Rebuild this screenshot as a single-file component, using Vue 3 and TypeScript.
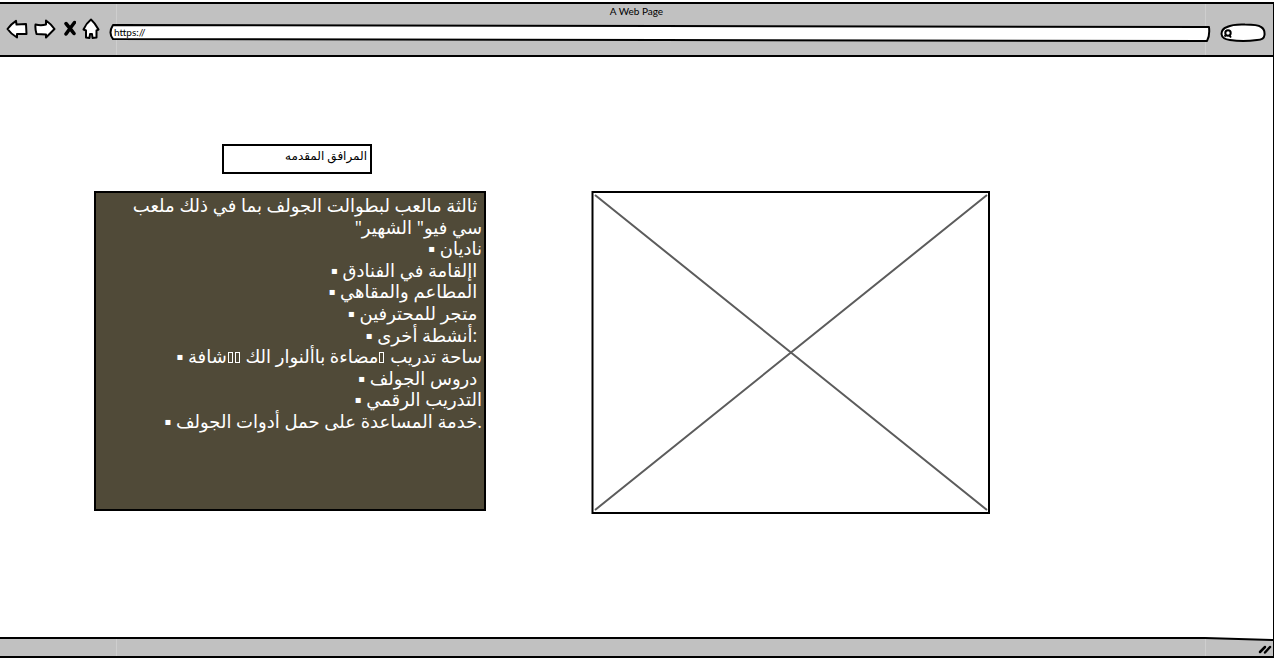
<script setup lang="ts">
import { ref } from 'vue'

const address = ref('https://')
const query = ref('')

// A null part stands for a character that has no glyph.
type Line = { bullet?: boolean; parts: (string | null)[] }
const lines: Line[] = [
  { parts: ['ثالثة مالعب لبطوالت الجولف بما في ذلك ملعب '] },
  { parts: ['"سي فيو" الشهير'] },
  { bullet: true, parts: [' ناديان'] },
  { bullet: true, parts: [' اإلقامة في الفنادق '] },
  { bullet: true, parts: [' المطاعم والمقاهي '] },
  { bullet: true, parts: [' متجر للمحترفين '] },
  { bullet: true, parts: [' أنشطة أخرى: '] },
  { bullet: true, parts: [' ساحة تدريب ', null, 'مضاءة باألنوار الك ', null, null, 'شافة'] },
  { bullet: true, parts: [' دروس الجولف '] },
  { bullet: true, parts: [' التدريب الرقمي'] },
  { bullet: true, parts: [' خدمة المساعدة على حمل أدوات الجولف.'] },
]
</script>

<template>
  <div class="window">
    <header class="bar">
      <h1 class="title">A Web Page</h1>
      <div class="tools">
        <nav class="nav" aria-label="Browser">
          <button type="button" aria-label="Back">
            <svg width="22" height="20" viewBox="0 0 22 20"><path class="shape" d="M1.5 10 Q5 5 10 1.8 L10.500 5.500 L20 5 L20.500 15 L11 15 L11 18.500 Q5 15 1.500 10Z" /></svg>
          </button>
          <button type="button" aria-label="Forward">
            <svg width="22" height="20" viewBox="0 0 22 20"><path class="shape" d="M1.500 5.500 Q7 7 12 5.500 L12 1.500 Q17 5 20.500 10 L12 18.500 L12 15.500 L2.500 15 Q1 10 1.500 5.500Z" /></svg>
          </button>
          <button type="button" aria-label="Stop">
            <svg width="14" height="20" viewBox="0 0 14 20"><path class="cross" d="M4 4.500 Q7 8 12 14.500 M12.500 3.500 Q9 8 4 15" /></svg>
          </button>
          <button type="button" aria-label="Home">
            <svg width="18" height="22" viewBox="0 0 18 22"><path class="shape" d="M9 1.500 Q13 5 16.500 11.500 L14.500 12.500 L14.500 19.500 L10.500 20 L10 16 L8 16 L7.500 20 L4 19.500 L4 12.500 L1.500 11.500 Q4 5.500 9 1.500Z" /></svg>
          </button>
        </nav>
        <label class="address">
          <svg class="outline" viewBox="0 0 1100 18" preserveAspectRatio="none" aria-hidden="true"><path class="shape" d="M4 1 L550 2 L1098 3 Q1099 12 1096 17 L550 16 L4 15 Q-1 9 4 1Z" /></svg>
          <input v-model="address" type="text" aria-label="Address" />
        </label>
        <label class="search">
          <svg class="outline" viewBox="0 0 46 20" preserveAspectRatio="none" aria-hidden="true">
            <path class="shape" d="M7 5 Q13 2 25 2.500 Q38 2.500 41 5 Q45 7 44.500 13 Q44 18 37 18 Q23 20 10 18 Q2 17 1.500 12 Q1.500 7 7 5Z" />
            <circle class="glass" cx="8" cy="11" r="2.700" />
            <path class="glass" d="M5.500 13.500 L4.500 14.500 M9 13 L11 15.500" />
          </svg>
          <input v-model="query" type="text" aria-label="Search" />
        </label>
      </div>
    </header>

    <main class="content">
      <section class="facilities">
        <h2 class="heading">المرافق المقدمه</h2>
        <div class="panel">
          <p v-for="(line, i) in lines" :key="i"><span v-if="line.bullet" class="bullet">▪</span><template v-for="(part, j) in line.parts" :key="j"><span v-if="part === null" class="missing"></span><template v-else>{{ part }}</template></template></p>
        </div>
      </section>
      <svg class="picture" viewBox="0 0 399 323" preserveAspectRatio="none" role="img" aria-label="Image placeholder">
        <path class="frame" d="M1.500 1 L398 1 L398 322 L1.500 322Z" />
        <path class="diagonal" d="M4 4 L396 319 M396 4 L4 319" />
      </svg>
    </main>

    <footer class="status">
      <svg class="edge" viewBox="0 0 1274 5" preserveAspectRatio="none" aria-hidden="true"><path class="above" d="M0 0 H1274 V3 L1206 1 H0Z" /><path class="line" d="M0 1 L1206 1 L1274 3" /></svg>
      <svg class="grip" width="14" height="12" viewBox="0 0 14 12" aria-hidden="true"><path class="mark" d="M2 8 L7 3 M7 8.500 L12 3" /></svg>
    </footer>
  </div>
</template>

<style>
body {
  background: #fff;
}
</style>

<style scoped>
.window {
  box-sizing: border-box;
  min-height: 100vh;
  padding: 2px 0 5px;
  display: flex;
  flex-direction: column;
  font-family: "Open Sans", "DejaVu Sans", sans-serif;
  color: #000;
}
.bar {
  box-sizing: border-box;
  height: 55px;
  border: solid #000;
  border-width: 2px 1px 2px 0;
}
.bar,
.status {
  background: linear-gradient(90deg, transparent 116px, #cecece 116px, #cecece 117px, transparent 117px), linear-gradient(270deg, transparent 67px, #cecece 67px, #cecece 68px, transparent 68px), #c1c1c1;
}
.title {
  margin: 0;
  font-family: Lato, sans-serif;
  font-size: 10px;
  font-weight: 400;
  line-height: 14px;
  text-align: center;
}
.tools {
  display: flex;
  align-items: center;
  gap: 9px;
  height: 24px;
  padding: 0 7px 0 6px;
}
.nav {
  display: flex;
  align-items: center;
  align-self: flex-start;
  gap: 6px;
}
button {
  display: block;
  padding: 0;
  border: 0;
  background: none;
}
button svg,
.outline {
  display: block;
}
.shape {
  fill: #fff;
  stroke: #000;
  stroke-width: 2;
  stroke-linejoin: round;
  vector-effect: non-scaling-stroke;
}
.cross {
  fill: none;
  stroke: #000;
  stroke-width: 3.5;
  stroke-linecap: round;
}
.glass {
  fill: none;
  stroke: #000;
  stroke-width: 2;
}
.address,
.search {
  display: grid;
  align-self: flex-end;
}
.address {
  flex: 1;
}
.address > *,
.search > * {
  grid-area: 1 / 1;
}
.outline {
  width: 100%;
  height: 18px;
}
.search {
  width: 46px;
}
.search .outline {
  height: 20px;
}
input {
  box-sizing: border-box;
  width: 100%;
  min-width: 0;
  height: 16px;
  padding: 0 5px;
  border: 0;
  outline: 0;
  background: none;
  font-family: Lato, sans-serif;
  font-size: 10px;
  color: #000;
}
.search input {
  padding-left: 14px;
}
.content {
  flex: 1;
  display: grid;
  grid-template-columns: 94fr 392fr 105fr 399fr 283fr;
  align-items: end;
  align-content: start;
  padding: 87px 0 24px;
  border-right: 1px solid #000;
}
.facilities {
  grid-column: 2;
  min-width: 0;
  display: flex;
  flex-direction: column;
  align-items: flex-start;
  gap: 17px;
}
.heading {
  box-sizing: border-box;
  width: 150px;
  height: 30px;
  margin: 0 0 0 128px;
  padding: 1px 3px;
  border: 2px solid #000;
  font-size: 12px;
  font-weight: 400;
  line-height: 18px;
  text-align: right;
}
.panel {
  box-sizing: border-box;
  width: 100%;
  min-height: 320px;
  padding: 2px;
  border: 2px solid #000;
  background: #504a38;
  color: #fff;
  font-size: 18px;
}
.panel p {
  margin: 0;
  line-height: 1.2;
  text-align: right;
  white-space: pre;
}
.bullet {
  font-size: 10px;
  line-height: 1;
  vertical-align: 3px;
}
.missing {
  display: inline-block;
  box-sizing: border-box;
  width: 5px;
  height: 11px;
  margin: 0 1px;
  border: 1px solid #fff;
}
.picture {
  grid-column: 4;
  display: block;
  width: 100%;
  height: 323px;
  margin-bottom: -3px;
}
.frame,
.diagonal {
  fill: #fff;
  stroke: #000;
  stroke-width: 2;
  vector-effect: non-scaling-stroke;
}
.diagonal {
  fill: none;
  stroke: #5c5c5c;
}
.status {
  display: flex;
  justify-content: space-between;
  flex-direction: column;
  align-items: flex-end;
  box-sizing: border-box;
  height: 21px;
  border: solid #000;
  border-width: 0 1px 2px 0;
}
.edge {
  display: block;
  width: 100%;
  height: 5px;
}
.above {
  fill: #fff;
}
.line {
  fill: none;
  stroke: #000;
  stroke-width: 2;
  vector-effect: non-scaling-stroke;
}
.grip {
  margin-right: 1px;
}
.mark {
  fill: none;
  stroke: #000;
  stroke-width: 2.500;
  stroke-linecap: round;
}
</style>
